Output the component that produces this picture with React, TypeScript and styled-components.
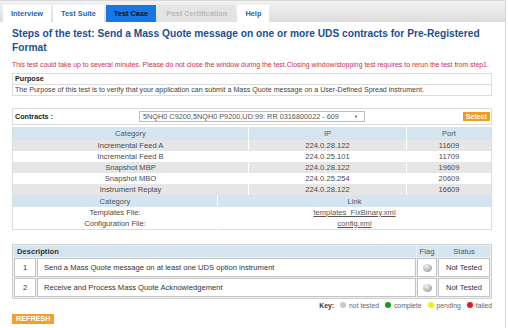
import styled, { createGlobalStyle } from "styled-components";

const GlobalStyle = createGlobalStyle`
  body {
    margin: 0;
    font-family: "Liberation Sans", Arial, sans-serif;
    background: #ffffff;
    color: #333;
  }
  table, td, th {
    font-family: "Liberation Sans", Arial, sans-serif;
  }
`;

const Page = styled.div`
  width: 505px;
  height: 327px;
  border-top: 1px solid #d8d8d8;
  border-right: 1px solid #d8d8d8;
  border-bottom: 1px solid #d0d0d0;
  overflow: hidden;
`;

const TabBar = styled.div`
  height: 21px;
  padding: 4px 0 0 3px;
  box-sizing: border-box;
  display: flex;
  gap: 2px;
  background: linear-gradient(#f3f3f3, #dcdcdc);
`;

const Tab = styled.div<{ $active?: boolean; $disabled?: boolean }>`
  height: 17px;
  padding: 0 8px;
  display: flex;
  align-items: center;
  font-size: 7.4px;
  font-weight: bold;
  color: ${(p) => (p.$active ? "#111" : p.$disabled ? "#b9b9b9" : "#2b63b0")};
  background: ${(p) => (p.$active ? "#1877e6" : p.$disabled ? "#e4e4e4" : "#ffffff")};
`;

const Content = styled.div`
  padding: 0 13px 0 12px;
`;

const Title = styled.h1`
  margin: 5px 0 0;
  font-size: 10.2px;
  line-height: 14px;
  font-weight: bold;
  color: #1c4f8f;
`;

const Warning = styled.div`
  margin-top: 5px;
  font-size: 6.9px;
  line-height: 10px;
  color: #c63048;
  white-space: nowrap;
`;

const PurposeBox = styled.div`
  margin-top: 3px;
  border: 1px solid #dcdcdc;
`;

const PurposeHead = styled.div`
  height: 10px;
  padding-left: 2px;
  font-size: 7.2px;
  font-weight: bold;
  line-height: 10px;
  color: #222;
  border-bottom: 1px solid #dcdcdc;
`;

const PurposeText = styled.div`
  height: 10px;
  padding-left: 2px;
  font-size: 7.1px;
  line-height: 10px;
  color: #444;
  white-space: nowrap;
`;

const ContractsBar = styled.div`
  margin-top: 12px;
  height: 15px;
  border: 1px solid #dcdcdc;
  display: flex;
  align-items: center;
  padding: 0 1px 0 2px;
`;

const Label = styled.span`
  width: 124px;
  font-size: 7.2px;
  font-weight: bold;
  color: #222;
`;

const FakeSelect = styled.div`
  width: 226px;
  height: 11px;
  border: 1px solid #bdbdbd;
  display: flex;
  align-items: center;
  justify-content: space-between;
  padding: 0 6px 0 3px;
  box-sizing: border-box;
  font-size: 7.3px;
  color: #555;
  white-space: nowrap;
`;

const Arrow = styled.span`
  font-size: 4px;
  color: #444;
`;

const OrangeButton = styled.button`
  margin-left: auto;
  border: none;
  background: #ee9b22;
  color: #fff;
  font-family: inherit;
  font-weight: bold;
  font-size: 7.2px;
  height: 9px;
  line-height: 9px;
  padding: 0 3px;
  display: flex;
  align-items: center;
`;

const Grid = styled.table<{ $top?: number }>`
  width: 100%;
  margin-top: ${(p) => p.$top ?? 0}px;
  border-collapse: collapse;
  table-layout: fixed;
  border-left: 1px solid #dcdcdc;
  border-right: 1px solid #dcdcdc;
  td, th {
    padding: 0;
    text-align: center;
    font-weight: normal;
    font-size: 7.6px;
    color: #4a4a4a;
    border-left: 1px solid #ffffff;
  }
  td:first-child, th:first-child {
    border-left: none;
  }
`;

const HeadRow = styled.tr<{ $h?: number }>`
  height: ${(p) => p.$h ?? 12}px;
  background: #d5e5f0;
  th {
    color: #555;
  }
`;

const DataRow = styled.tr<{ $shade?: boolean }>`
  height: 11px;
  background: ${(p) => (p.$shade ? "#e6e6e6" : "#ffffff")};
`;

const FileLink = styled.a`
  color: #555;
  text-decoration: underline;
`;

const LinkTable = styled(Grid)`
  border-bottom: 1px solid #dcdcdc;
`;

const StepsTable = styled.table`
  width: 100%;
  margin-top: 14px;
  border-collapse: separate;
  border-spacing: 1px;
  table-layout: fixed;
  background: #f0f0f0;
  border: 1px solid #cfcfcf;
  td {
    background: #fff;
    border: 1px solid #c4c4c4;
    padding: 0;
    font-size: 7.6px;
    color: #333;
  }
`;

const StepsHead = styled.tr`
  height: 11px;
  td {
    background: #d5e5f0;
    border-color: #d5e5f0;
    color: #555;
    text-align: center;
  }
`;

const DescHead = styled.td`
  && {
    text-align: left;
    font-weight: bold;
    padding-left: 2px;
    color: #333;
  }
`;

const StepRow = styled.tr`
  height: 19px;
`;

const NumCell = styled.td`
  text-align: center;
`;

const TextCell = styled.td`
  && {
    padding-left: 6px;
  }
`;

const CenterCell = styled.td`
  text-align: center;
`;

const Ball = styled.span`
  display: inline-block;
  width: 9px;
  height: 8px;
  border-radius: 50%;
  vertical-align: middle;
  background: radial-gradient(circle at 40% 30%, #f4f4f4, #a9a9a9 70%, #8a8a8a);
`;

const KeyLine = styled.div`
  margin-top: 3px;
  display: flex;
  justify-content: flex-end;
  align-items: center;
  gap: 3px;
  font-size: 6.8px;
  color: #666;
`;

const KeyLabel = styled.span`
  font-weight: bold;
  color: #333;
`;

const Dot = styled.span<{ $color: string }>`
  display: inline-block;
  width: 6px;
  height: 6px;
  border-radius: 50%;
  margin-left: 3px;
  background: ${(p) => p.$color};
`;

const RefreshBar = styled.div`
  margin-top: 5px;
`;

const RefreshButton = styled(OrangeButton)`
  margin-left: 0;
  height: 10px;
  padding: 0 4px;
  font-size: 7.2px;
  background: #f0a030;
`;

const feeds = [
  { name: "Incremental Feed A", ip: "224.0.28.122", port: "11609" },
  { name: "Incremental Feed B", ip: "224.0.25.101", port: "11709" },
  { name: "Snapshot MBP", ip: "224.0.28.122", port: "19609" },
  { name: "Snapshot MBO", ip: "224.0.25.254", port: "20609" },
  { name: "Instrument Replay", ip: "224.0.28.122", port: "16609" },
];

const steps = [
  "Send a Mass Quote message on at least one UDS option instrument",
  "Receive and Process Mass Quote Acknowledgement",
];

export default function App() {
  return (
    <Page>
      <GlobalStyle />
      <TabBar>
        <Tab>Interview</Tab>
        <Tab>Test Suite</Tab>
        <Tab $active>Test Case</Tab>
        <Tab $disabled>Post Certification</Tab>
        <Tab>Help</Tab>
      </TabBar>
      <Content>
        <Title>
          Steps of the test: Send a Mass Quote message on one or more UDS contracts for Pre-Registered
          Format
        </Title>
        <Warning>
          This test could take up to several minutes. Please do not close the window during the
          test.Closing window/stopping test requires to rerun the test from step1.
        </Warning>
        <PurposeBox>
          <PurposeHead>Purpose</PurposeHead>
          <PurposeText>
            The Purpose of this test is to verify that your application can submit a Mass Quote
            message on a User-Defined Spread instrument.
          </PurposeText>
        </PurposeBox>

        <ContractsBar>
          <Label>Contracts :</Label>
          <FakeSelect>
            <span>5NQH0 C9200,5NQH0 P9200,UD:99: RR 0316800022 - 609</span>
            <Arrow>▼</Arrow>
          </FakeSelect>
          <OrangeButton>Select</OrangeButton>
        </ContractsBar>

        <Grid $top={2}>
          <colgroup>
            <col style={{ width: 236 }} />
            <col style={{ width: 158 }} />
            <col />
          </colgroup>
          <tbody>
            <HeadRow $h={13}>
              <th>Category</th>
              <th>IP</th>
              <th>Port</th>
            </HeadRow>
            {feeds.map((f, i) => (
              <DataRow key={f.name} $shade={i % 2 === 0}>
                <td>{f.name}</td>
                <td>{f.ip}</td>
                <td>{f.port}</td>
              </DataRow>
            ))}
          </tbody>
        </Grid>
        <LinkTable>
          <colgroup>
            <col style={{ width: 205 }} />
            <col />
          </colgroup>
          <tbody>
            <HeadRow>
              <th>Category</th>
              <th>Link</th>
            </HeadRow>
            <DataRow>
              <td>Templates File:</td>
              <td>
                <FileLink>templates_FixBinary.xml</FileLink>
              </td>
            </DataRow>
            <DataRow>
              <td>Configuration File:</td>
              <td>
                <FileLink>config.xml</FileLink>
              </td>
            </DataRow>
          </tbody>
        </LinkTable>

        <StepsTable>
          <colgroup>
            <col style={{ width: 22 }} />
            <col />
            <col style={{ width: 20 }} />
            <col style={{ width: 52 }} />
          </colgroup>
          <tbody>
            <StepsHead>
              <DescHead colSpan={2}>Description</DescHead>
              <td>Flag</td>
              <td>Status</td>
            </StepsHead>
            {steps.map((s, i) => (
              <StepRow key={s}>
                <NumCell>{i + 1}</NumCell>
                <TextCell>{s}</TextCell>
                <CenterCell>
                  <Ball />
                </CenterCell>
                <CenterCell>Not Tested</CenterCell>
              </StepRow>
            ))}
          </tbody>
        </StepsTable>

        <KeyLine>
          <KeyLabel>Key:</KeyLabel>
          <Dot $color="#c8c8c8" />
          <span>not tested</span>
          <Dot $color="#1a9a1a" />
          <span>complete</span>
          <Dot $color="#f2ee1a" />
          <span>pending</span>
          <Dot $color="#e21b1b" />
          <span>failed</span>
        </KeyLine>

        <RefreshBar>
          <RefreshButton>REFRESH</RefreshButton>
        </RefreshBar>
      </Content>
    </Page>
  );
}
